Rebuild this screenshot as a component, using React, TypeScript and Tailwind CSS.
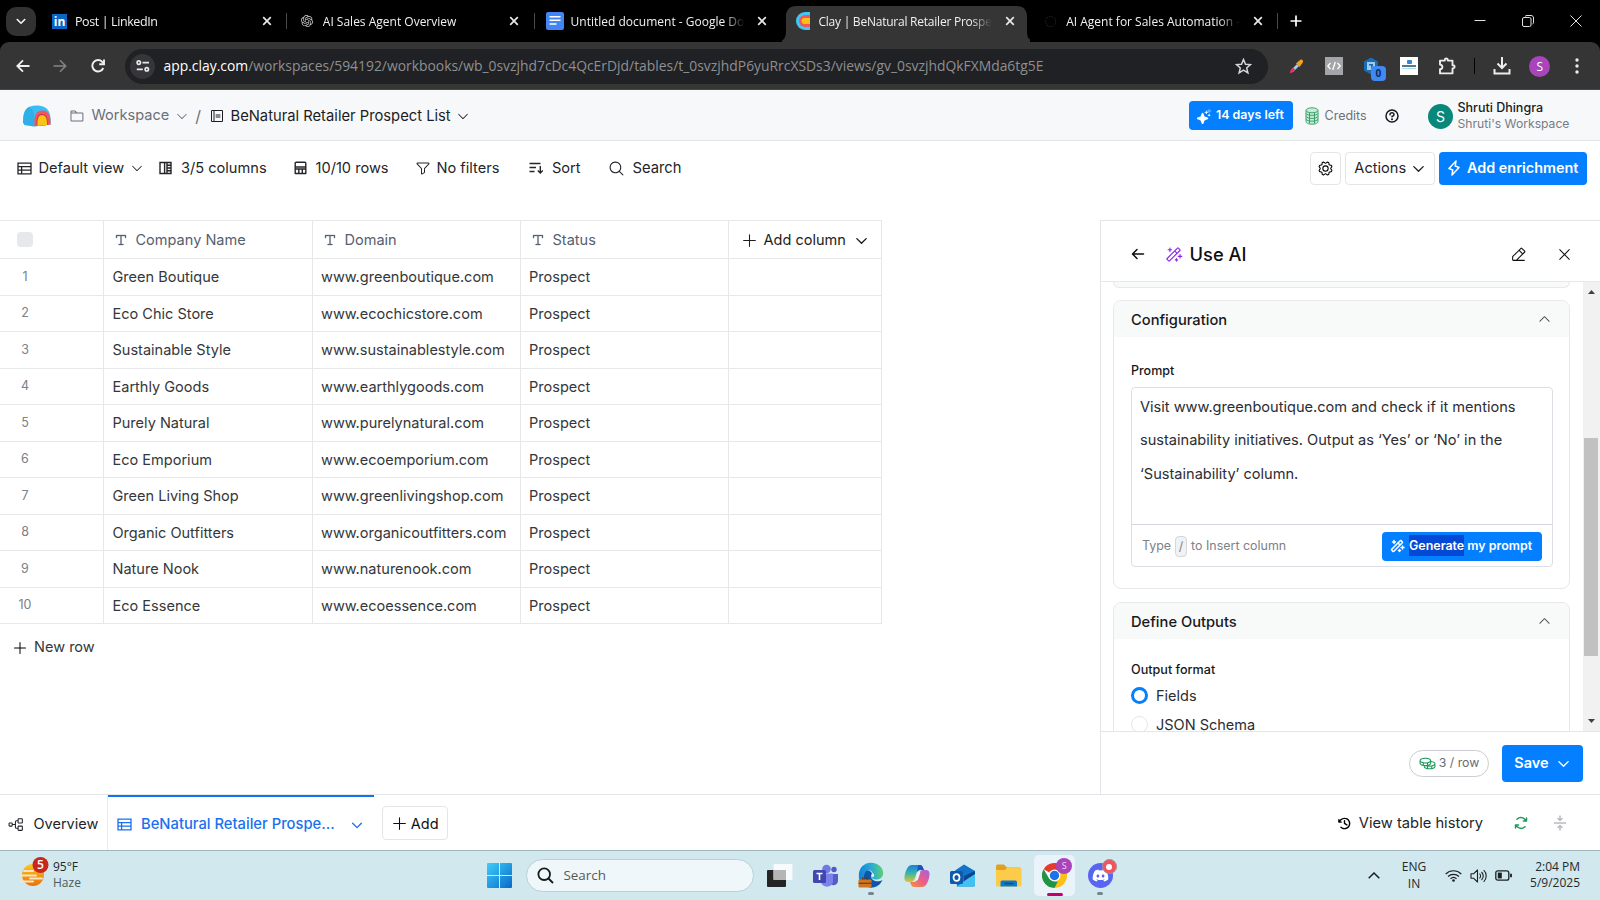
import React from 'react';
import {
  PiArrowLeftBold,
  PiArrowsClockwiseBold,
  PiArrowsInLineVerticalBold,
  PiCaretDown,
  PiCaretDownBold,
  PiCaretUp,
  PiClockCounterClockwiseBold,
  PiCoins,
  PiFolder,
  PiFunnel,
  PiGear,
  PiLightningBold,
  PiMagicWand,
  PiMagicWandBold,
  PiMagnifyingGlass,
  PiNotebook,
  PiPencilSimpleLine,
  PiPlus,
  PiQuestionBold,
  PiSparkleFill,
  PiTextT,
  PiTreeStructure,
  PiX,
} from 'react-icons/pi';
import { SiOpenai } from 'react-icons/si';
import { FaDiscord } from 'react-icons/fa';

const COMPANIES = [
  { name: 'Green Boutique', domain: 'www.greenboutique.com' },
  { name: 'Eco Chic Store', domain: 'www.ecochicstore.com' },
  { name: 'Sustainable Style', domain: 'www.sustainablestyle.com' },
  { name: 'Earthly Goods', domain: 'www.earthlygoods.com' },
  { name: 'Purely Natural', domain: 'www.purelynatural.com' },
  { name: 'Eco Emporium', domain: 'www.ecoemporium.com' },
  { name: 'Green Living Shop', domain: 'www.greenlivingshop.com' },
  { name: 'Organic Outfitters', domain: 'www.organicoutfitters.com' },
  { name: 'Nature Nook', domain: 'www.naturenook.com' },
  { name: 'Eco Essence', domain: 'www.ecoessence.com' },
];

/* ---------- Small drawn icons ---------- */

const TableIcon: React.FC<{ size?: number }> = ({ size = 15 }) => (
  <svg width={size} height={size} viewBox="0 0 15 15" fill="none" stroke="currentColor" strokeWidth="1.3">
    <path d="M1 2.2h13v10.6H1zM1 5.7h13M1 9.2h13M4.6 5.7v7.1" />
  </svg>
);

const ColumnsIcon = () => (
  <svg width="13" height="14" viewBox="0 0 13 14" fill="none" stroke="currentColor" strokeWidth="1.4">
    <path d="M1 1.5h11v11H1zM5.6 1.5v11M7.5 4.2H12M7.5 7H12M7.5 9.8H12M8 1.5v11" />
  </svg>
);

const RowsIcon = () => (
  <svg width="14" height="14" viewBox="0 0 14 14" fill="none" stroke="currentColor" strokeWidth="1.4" strokeLinejoin="round">
    <path d="M1.2 2.2q0-1 1-1h8.6q1 0 1 1v10.3H1.2ZM1.2 6h10.6M1.2 8h10.6M4.8 8v4.5M8.3 8v4.5" />
  </svg>
);

const SortIcon = () => (
  <svg width="15" height="14" viewBox="0 0 15 14" fill="none" stroke="currentColor" strokeWidth="1.4">
    <path d="M.5 2.5h11M.5 6.5h6.5M.5 10.5h5M11.3 5v7M8.8 9.6l2.5 2.5 2.5-2.5" />
  </svg>
);

const ClayLogo = () => (
  <svg width="28" height="22" viewBox="0 0 28 22">
    <path d="M0 17.500C0 8 2 3.500 7 1.500c5-1.500 11-1.200 15 1C26.500 5 28 10 27.600 19.500L11 21.500 1.500 20Z" fill="#39bdf3" />
    <path d="M0 17.500C0 8 2 3.500 6 2.500c5 1 6 8 5 19L1.500 20Z" fill="#28a4dc" opacity=".55" />
    <path d="M11.500 21.300C10.500 10 13.500 5.500 19.300 5.500S28 10.500 27.500 19.500l-3 .5Z" fill="#f2555f" />
    <path d="M13.800 21C13 12.500 15 9 19 9s6 3.500 5.700 11Z" fill="#8f2230" opacity=".55" />
    <path d="M14.500 21C14 13.500 15.500 10 19 10s5.300 3.500 5 10Z" fill="#fcc312" />
  </svg>
);

const ChromeClose = () => (
  <svg width="10" height="10" viewBox="0 0 10 10" stroke="#e8e8e8" strokeWidth="1.7">
    <path d="M1.2 1.2l7.600 7.600M8.800 1.200L1.200 8.800" />
  </svg>
);

/* ---------- Browser chrome ---------- */

interface BrowserTabProps {
  icon: React.ReactNode;
  title: string;
  textClass?: string;
  active?: boolean;
  separator?: boolean;
}

const BrowserTab: React.FC<BrowserTabProps> = ({ icon, title, textClass = 'text-[12px]', active, separator }) => (
  <div className="relative w-[247.8px] h-full flex items-center shrink-0">
    {active && (
      <svg className="absolute left-0 bottom-0" width="248" height="36" viewBox="0 0 248 36" fill="#353535">
        <path d="M-6 36c6 0 10-3 10-10V10C4 4 8 0 14 0h221c6 0 10 4 10 10v16c0 7 4 10 10 10Z" />
      </svg>
    )}
    <span className="relative ml-[11px] w-[19px] flex justify-center shrink-0">{icon}</span>
    <span
      className={`relative ml-[6px] w-[177px] pt-px whitespace-nowrap leading-5 text-[#f1f1f1] font-medium [mask-image:linear-gradient(to_right,#000_153px,transparent_174px)] ${textClass}`}
    >
      {title}
    </span>
    <span className="relative ml-[9.5px]"><ChromeClose /></span>
    {separator && <span className="ml-auto w-px h-4 bg-[#4a4a4a]" />}
  </div>
);

const TabStrip = () => (
  <div className="h-[42px] bg-black flex items-center shrink-0">
    <div className="ml-[6px] w-[30px] h-[29px] rounded-[10px] bg-[#323232] flex items-center justify-center text-white">
      <PiCaretDownBold size={12} strokeWidth={8} stroke="currentColor" />
    </div>
    <div className="ml-[3px] h-full flex">
      <BrowserTab
        separator
        textClass="text-[12.5px] tracking-[-0.4px]"
        title="Post | LinkedIn"
        icon={<span className="w-[15px] h-[15px] bg-[#0a66c2] text-white text-[12px] leading-[15px] font-bold text-center">in</span>}
      />
      <BrowserTab separator title="AI Sales Agent Overview" icon={<SiOpenai size={12} color="#c9c9c9" />} />
      <BrowserTab
        title="Untitled document - Google Do"
        icon={
          <svg width="18" height="18" viewBox="0 0 18 18">
            <rect width="18" height="18" rx="2" fill="#4285f4" />
            <path d="M3.500 4.700h11M3.500 8.300h11M3.500 12h7" stroke="#fff" strokeWidth="1.500" />
          </svg>
        }
      />
      <BrowserTab
        active
        textClass="text-[12px] tracking-[-0.23px]"
        title="Clay | BeNatural Retailer Prospe"
        icon={
          <svg width="15" height="18" viewBox="0 0 15 18">
            <path d="M15 0H10a9 9 0 0 0 0 18h5Z" fill="#3fc8f5" />
            <path d="M15 3H10a6 6 0 0 0 0 12h5Z" fill="#f0565f" />
            <path d="M15 6H9.500a3 3 0 0 0 0 6H15Z" fill="#fbbf14" />
          </svg>
        }
      />
      <BrowserTab
        separator
        title="AI Agent for Sales Automation -"
        icon={<span className="w-[11px] h-[11px] rounded-full border border-dotted border-[#2c2c2c]" />}
      />
    </div>
    <svg className="ml-[12px] text-white" width="12" height="12" viewBox="0 0 12 12" stroke="currentColor" strokeWidth="1.700">
      <path d="M6 .5v11M.5 6h11" />
    </svg>
    <div className="ml-auto mr-[18px] flex items-center gap-[36px] text-[#e2e2e2]">
      <svg width="12" height="12" viewBox="0 0 12 12" stroke="currentColor"><path d="M.5 5.500h11" /></svg>
      <svg width="12" height="12" viewBox="0 0 12 12" stroke="currentColor" fill="none">
        <rect x=".5" y="2.500" width="8.500" height="9" rx="1.500" />
        <path d="M3 1.500C3.500.8 4 .5 5 .5h4c1.500 0 2.500 1 2.500 2.500v4c0 1-.5 2-1 2.200" />
      </svg>
      <svg width="12" height="12" viewBox="0 0 12 12" stroke="currentColor"><path d="M.5.5l11 11M11.500.5l-11 11" /></svg>
    </div>
  </div>
);

const ExtSlot: React.FC<{ children: React.ReactNode }> = ({ children }) => (
  <div className="w-[37.5px] flex items-center justify-center shrink-0">{children}</div>
);

const AddressBar = () => (
  <div className="bg-black shrink-0">
    <div className="h-12 pt-px bg-[#353535] rounded-t-[9px] flex items-center border-b border-[#484848]">
      <svg className="ml-[16px]" width="14" height="14" viewBox="0 0 14 14" fill="none" stroke="#f0f0f0" strokeWidth="1.800">
        <path d="M13.500 7H1.500M7 1.300L1.300 7 7 12.700" />
      </svg>
      <svg className="ml-[23px]" width="14" height="14" viewBox="0 0 14 14" fill="none" stroke="#858585" strokeWidth="1.500">
        <path d="M.5 7h12M7 1.300L12.700 7 7 12.700" />
      </svg>
      <svg className="ml-[24px]" width="14" height="14" viewBox="0 0 14 14" fill="none" stroke="#f0f0f0" strokeWidth="1.900">
        <path d="M12.300 9a5.700 5.700 0 1 1-1.100-6.200L12.600 4.300" />
        <path d="M13 .4v4.800H8.200" />
      </svg>
      <div className="ml-5 w-[1143px] h-[35px] rounded-full bg-[#202124] flex items-center shrink-0">
        <span className="ml-[5px] w-[25px] h-[25px] rounded-full bg-[#363639] flex items-center justify-center">
          <svg width="14" height="12" viewBox="0 0 14 12" fill="none" stroke="#e8e8e8" strokeWidth="1.700">
            <circle cx="2.800" cy="2.600" r="1.700" />
            <path d="M6.500 2.600H13M.8 9.300h6" />
            <circle cx="10.800" cy="9.300" r="1.700" />
          </svg>
        </span>
        <span className="ml-[8.5px] pt-px text-[13.88px] text-[#8e8f92] whitespace-nowrap">
          <span className="text-white">app.clay.com</span>
          /workspaces/594192/workbooks/wb_0svzjhd7cDc4QcErDjd/tables/t_0svzjhdP6yuRrcXSDs3/views/gv_0svzjhdQkFXMda6tg5E
        </span>
        <svg className="ml-auto mr-[16px]" width="17" height="17" viewBox="0 0 17 17" fill="none" stroke="#d6d6d6" strokeWidth="1.500">
          <path d="M8.500 1.500l2 4.700 5 .4-3.800 3.300 1.200 5-4.400-2.700-4.400 2.700 1.200-5L1.500 6.600l5-.4Z" />
        </svg>
      </div>
      <div className="ml-[10px] flex items-center">
        <ExtSlot>
          <svg width="15" height="15" viewBox="0 0 15 15">
            <path d="M1.300 13.700l1-3 5.500-5.500 2 2-5.500 5.500Z" fill="#9fd0ee" />
            <path d="M.8 14.200l1-3.500L4 8.500l2.300 2.300L4 13Z" fill="#e8305e" />
            <path d="M7 4.500L11 1c2-1.500 4 1 2.600 2.800L10.500 8Z" fill="#f6a01b" />
          </svg>
        </ExtSlot>
        <ExtSlot>
          <svg width="18" height="18" viewBox="0 0 18 18" fill="none" stroke="#fff" strokeWidth="1.300">
            <rect width="18" height="18" fill="#a3a5a8" stroke="none" />
            <path d="M5.500 6L2.800 9l2.700 3M12.500 6l2.700 3-2.700 3M10.300 5l-2.600 8" />
          </svg>
        </ExtSlot>
        <ExtSlot>
          <span className="relative -ml-[2px]">
            <svg width="16" height="18" viewBox="0 0 16 18">
              <path d="M8 .5l7 4v9l-7 4-7-4v-9Z" fill="#1c6cb4" />
              <path d="M4 5h8v8H4Z" fill="#9bcbef" />
              <path d="M6 7h4v1.500L8 12V8.500H6Z" fill="#1c6cb4" />
            </svg>
            <span className="absolute left-[8px] top-[9px] w-[15px] h-[15px] rounded-[4px] bg-[#4088f2] text-[#0d2a5c] text-[10px] leading-[15px] text-center font-bold">0</span>
          </span>
        </ExtSlot>
        <ExtSlot>
          <span className="w-[18px] h-[18px] bg-white flex flex-col items-center pt-[3px]">
            <span className="w-[5px] h-[4px] bg-[#3a86c4] rounded-[1px]" />
            <span className="mt-[1px] w-[14px] h-[2px] bg-[#5b7590]" />
            <span className="mt-[1px] w-[14px] h-px bg-[#a8dcf0]" />
          </span>
        </ExtSlot>
        <ExtSlot>
          <svg width="18" height="18" viewBox="0 0 18 18" fill="none" stroke="#ececec" strokeWidth="1.900" strokeLinejoin="round">
            <path d="M2 3.600h4.800V3a1.500 1.500 0 0 1 3 0v.6h4.700v4.600h.5a1.600 1.600 0 0 1 0 3.200h-.5v5H2v-4.200c3.200-.3 3.200-4.300 0-4.600Z" />
          </svg>
        </ExtSlot>
        <span className="w-[18px] flex justify-center"><span className="w-px h-4 bg-black" /></span>
        <ExtSlot>
          <svg width="18" height="18" viewBox="0 0 18 18" fill="none" stroke="#ececec" strokeWidth="2">
            <path d="M9 0v10.500M4.500 6.500L9 11l4.500-4.500M1.500 12v4.500h15V12" />
          </svg>
        </ExtSlot>
        <ExtSlot>
          <span className="w-[21px] h-[21px] rounded-full bg-[#a944bb] text-white text-[12px] leading-[21px] text-center">S</span>
        </ExtSlot>
        <ExtSlot>
          <svg width="4" height="16" viewBox="0 0 4 16" fill="#ececec">
            <circle cx="2" cy="2" r="1.700" /><circle cx="2" cy="8" r="1.700" /><circle cx="2" cy="14" r="1.700" />
          </svg>
        </ExtSlot>
      </div>
    </div>
  </div>
);

/* ---------- Clay header and toolbar ---------- */

const AppHeader = () => (
  <div className="h-[51px] pt-[2px] bg-[#f7f8fa] border-b border-[#e4e5e9] flex items-center shrink-0 text-[14.6px] whitespace-nowrap">
    <div className="ml-[23px]"><ClayLogo /></div>
    <div className="ml-[18px] w-[132px] flex items-center text-[#6b7078] shrink-0">
      <PiFolder size={16} />
      <span className="ml-[6.5px]">Workspace</span>
      <PiCaretDown size={14} className="ml-[6px]" />
      <span className="ml-[6px] text-[16px] leading-none">/</span>
    </div>
    <div className="ml-[7.5px] flex items-center text-[#1c1d22]">
      <PiNotebook size={16} />
      <span className="ml-[6px] text-[14.75px]">BeNatural Retailer Prospect List</span>
      <PiCaretDown size={14} className="ml-[5.5px]" />
    </div>
    <button className="ml-auto -mt-px w-[104px] h-[29px] bg-[#047fff] rounded-[4px] text-white text-[12.4px] font-semibold flex items-center shrink-0">
      <span className="relative ml-[7px] w-[15px] h-[16px]">
        <PiSparkleFill size={15} className="absolute left-0 top-[2px]" />
        <PiPlus size={6} className="absolute right-[-1px] top-0" />
      </span>
      <span className="ml-[5px]">14 days left</span>
    </button>
    <div className="ml-[12px] w-[87px] flex items-center text-[12.5px] text-[#6d7278]">
      <svg width="14" height="18" viewBox="0 0 14 18" fill="#c9ecd8" stroke="#2a9c62" strokeWidth=".9">
        <path d="M1 3.500v11C1 16 3.500 17.200 7 17.200s6-1.200 6-2.700v-11" />
        <ellipse cx="7" cy="3.300" rx="6" ry="2.500" />
        <path d="M1 6.500C2 9 12 9 13 6.500M1 9.500C2 12 12 12 13 9.500M1 12.300c1 2.500 11 2.500 12 0M4.500 5.500v11.200M9.500 5.500v11.200" fill="none" />
      </svg>
      <span className="ml-[5.5px]">Credits</span>
    </div>
    <PiQuestionBold size={16} className="-ml-[8px] text-[#17181c]" />
    <div className="ml-[28px] w-[172px] flex items-center">
      <span className="w-[25px] h-[25px] rounded-full bg-[#07887a] text-white text-[14px] leading-[25px] text-center">S</span>
      <div className="ml-[4.5px] text-[12.5px] leading-[16.5px]">
        <div className="font-medium text-[#1a1b1f]">Shruti Dhingra</div>
        <div className="text-[#777c84] text-[12.15px]">Shruti's Workspace</div>
      </div>
    </div>
  </div>
);

const ToolbarItem: React.FC<{ className: string; icon: React.ReactNode; children: React.ReactNode }> = ({ className, icon, children }) => (
  <div className={`flex items-center shrink-0 ${className}`}>
    <span className="w-[22px] shrink-0">{icon}</span>
    {children}
  </div>
);

const Toolbar = () => (
  <div className="h-[79px] pt-[11px] shrink-0">
    <div className="h-[33px] pl-[16.5px] pr-[13px] flex items-center text-[14.6px] text-[#24252a] whitespace-nowrap">
      <ToolbarItem className="w-[142.5px]" icon={<TableIcon />}>
        Default view <PiCaretDown size={14} className="ml-[6px]" />
      </ToolbarItem>
      <ToolbarItem className="w-[134.5px]" icon={<ColumnsIcon />}>3/5 columns</ToolbarItem>
      <ToolbarItem className="w-[121px]" icon={<RowsIcon />}>10/10 rows</ToolbarItem>
      <ToolbarItem className="w-[113px]" icon={<PiFunnel size={16} />}>No filters</ToolbarItem>
      <ToolbarItem className="w-[80px]" icon={<span className="block pl-px"><SortIcon /></span>}><span className="ml-[2.5px]">Sort</span></ToolbarItem>
      <ToolbarItem className="" icon={<PiMagnifyingGlass size={17} />}><span className="ml-[3px] text-[14.75px]">Search</span></ToolbarItem>
      <button className="ml-auto w-[31px] h-[33px] border border-[#e4e5e9] rounded-[4px] flex items-center justify-center text-black">
        <PiGear size={17} />
      </button>
      <button className="ml-[4px] w-[90px] h-[33px] border border-[#e4e5e9] rounded-[4px] flex items-center justify-center">
        Actions <PiCaretDownBold size={15} className="ml-[4.5px]" />
      </button>
      <button className="ml-[4px] w-[148px] h-[33px] pb-px bg-[#047fff] rounded-[4px] text-white text-[14.4px] font-semibold flex items-center">
        <PiLightningBold size={16} className="ml-[7px]" />
        <span className="ml-[5px]">Add enrichment</span>
      </button>
    </div>
  </div>
);

/* ---------- Table ---------- */

const HeaderCell: React.FC<{ label: string; className: string }> = ({ label, className }) => (
  <div className={`border-r border-[#e7e8ea] pt-[2px] flex items-center text-[#566070] ${className}`}>
    <PiTextT size={16} className="ml-[9px] mb-[2px]" strokeWidth={5} stroke="currentColor" />
    <span className="ml-[6.5px]">{label}</span>
  </div>
);

const DataTable = () => (
  <div className="flex-1 text-[14.54px] whitespace-nowrap text-[#35373b]">
    <div className="w-[882px] border-t border-[#e7e8ea]">
      <div className="h-[38px] flex border-b border-[#e7e8ea]">
        <div className="w-[104px] border-r border-[#e7e8ea] flex items-center">
          <span className="ml-[17px] w-[16px] h-[15px] rounded-[4px] bg-[#e7e8eb]" />
        </div>
        <HeaderCell label="Company Name" className="w-[209px]" />
        <HeaderCell label="Domain" className="w-[208px]" />
        <HeaderCell label="Status" className="w-[208px]" />
        <div className="w-[153px] border-r border-[#e7e8ea] pt-[2px] flex items-center text-[#1c1d22]">
          <PiPlus size={17} className="ml-[12px]" />
          <span className="ml-[5.5px]">Add column</span>
          <PiCaretDownBold size={15} className="ml-[8px]" />
        </div>
      </div>
      {COMPANIES.map((c, i) => (
        <div key={c.domain} className="h-[36.5px] flex border-b border-[#e7e8ea]">
          <div className="w-[104px] border-r border-[#e7e8ea] pt-px flex items-center">
            <span className="w-[50px] text-center text-[12.5px] text-[#7c8087]">{i + 1}</span>
          </div>
          <div className="w-[209px] border-r border-[#e7e8ea] pl-[8.5px] pt-[3px] flex items-center">{c.name}</div>
          <div className="w-[208px] border-r border-[#e7e8ea] pl-[8px] pt-[3px] flex items-center">{c.domain}</div>
          <div className="w-[208px] border-r border-[#e7e8ea] pl-[8px] pt-[3px] flex items-center">Prospect</div>
          <div className="w-[153px] border-r border-[#e7e8ea]" />
        </div>
      ))}
    </div>
    <div className="h-[47px] pt-px flex items-center">
      <PiPlus size={16} className="ml-[12px] text-black" />
      <span className="ml-[6px]">New row</span>
    </div>
  </div>
);

/* ---------- Use AI side panel ---------- */

const PanelCard: React.FC<{ title: string; className?: string; children: React.ReactNode }> = ({ title, className = '', children }) => (
  <div className={`border border-[#e7e8ea] rounded-[8px] overflow-hidden shrink-0 ${className}`}>
    <div className="h-[36px] pl-[17px] pr-[17.5px] bg-[#f8faf9] flex items-center text-[14.7px] font-medium text-[#17181c]">
      <span className="pt-[2px]">{title}</span>
      <PiCaretUp size={15} className="ml-auto text-[#4a4d55]" />
    </div>
    {children}
  </div>
);

const SidePanel = () => (
  <div className="w-[500px] border-l border-t border-[#e4e5e9] flex flex-col shrink-0 whitespace-nowrap">
    <div className="h-[61px] pt-[6px] border-b border-[#e7e8ea] flex items-center shrink-0 text-[#0e0f12]">
      <PiArrowLeftBold size={16} className="ml-[28.5px]" />
      <PiMagicWand size={19} className="ml-[18.5px] text-[#8b2be8]" />
      <span className="ml-[6.5px] pt-px text-[18.3px] font-medium">Use AI</span>
      <PiPencilSimpleLine size={17} className="ml-auto" />
      <PiX size={17} className="ml-[29px] mr-[27px]" />
    </div>
    <div className="h-[450px] flex border-b border-[#e4e5e9] shrink-0">
      <div className="flex-1 h-full pl-[12px] pr-[13px] flex flex-col overflow-hidden">
        <div className="h-[6px] border border-t-0 border-[#e7e8ea] rounded-b-[8px] bg-[#f8faf9] shrink-0" />
        <PanelCard title="Configuration" className="mt-[12px] h-[289px]">
          <div className="mt-[25px] ml-[17px] text-[12.5px] leading-[18px] font-medium text-[#17181c]">Prompt</div>
          <div className="mt-[7px] ml-[17px] w-[422px] h-[180px] border border-[#dcdee3] rounded-[4px] flex flex-col">
            <div className="h-[137px] pl-[8px] pt-[3px] text-[14.58px] leading-[33.4px] text-[#2b2d33] border-b border-[#d3d6dc]">
              Visit www.greenboutique.com and check if it mentions
              <br />
              sustainability initiatives. Output as ‘Yes’ or ‘No’ in the
              <br />
              ‘Sustainability’ column.
            </div>
            <div className="flex-1 pt-px flex items-center pl-[10px] pr-[10px] text-[12.45px] text-[#7d8188]">
              Type
              <span className="mx-[4px] w-[12px] h-[21px] rounded-[4px] border border-[#d5d7da] bg-[#f1f2f3] text-center leading-[19px]">/</span>
              to Insert column
              <button className="ml-auto w-[160px] h-[29px] rounded-[4px] bg-[#047fff] text-white text-[12.45px] font-semibold flex items-center">
                <PiMagicWandBold size={16} className="ml-[7px]" />
                <span className="ml-[4px]"><span className="bg-[#0449d6] py-[3px]">Generate</span> my prompt</span>
              </button>
            </div>
          </div>
        </PanelCard>
        <PanelCard title="Define Outputs" className="mt-[13px] h-[170px]">
          <div className="mt-[22px] ml-[17px] text-[12.6px] leading-[18px] font-medium text-[#17181c]">Output format</div>
          <div className="mt-[7px] ml-[17px] flex items-center text-[14.5px] leading-[19px] text-[#2b2d33]">
            <span className="w-[17px] h-[17px] rounded-full border-[3.5px] border-[#047fff]" />
            <span className="ml-[8px]">Fields</span>
          </div>
          <div className="mt-[10px] ml-[17px] flex items-center text-[14.5px] leading-[19px] text-[#2b2d33]">
            <span className="w-[17px] h-[17px] rounded-full border border-[#e4e5e9]" />
            <span className="ml-[8px]">JSON Schema</span>
          </div>
        </PanelCard>
      </div>
      <div className="w-[17px] bg-[#f1f1f1] flex flex-col items-center shrink-0">
        <svg className="mt-[8px]" width="7" height="4" viewBox="0 0 7 4" fill="#404040"><path d="M0 4l3.500-4L7 4Z" /></svg>
        <div className="mt-[144px] mr-px w-[14px] h-[218px] bg-[#c1c1c1]" />
        <svg className="mt-auto mb-[8px]" width="7" height="4" viewBox="0 0 7 4" fill="#404040"><path d="M0 0l3.500 4L7 0Z" /></svg>
      </div>
    </div>
    <div className="flex-1 flex items-center justify-end pr-[17px]">
      <div className="w-[80px] h-[27px] pt-px rounded-full border border-[#cbcdd2] flex items-center justify-center text-[12.3px] text-[#686c73]">
        <PiCoins size={17} className="text-[#1b9a59] mr-[3px]" />
        3 / row
      </div>
      <button className="ml-[13px] w-[81px] h-[37px] rounded-[4px] bg-[#047fff] text-white text-[14.5px] font-semibold flex items-center justify-center">
        Save <PiCaretDownBold size={15} className="ml-[7px]" />
      </button>
    </div>
  </div>
);

/* ---------- Bottom tabs ---------- */

const BottomBar = () => (
  <div className="h-[56px] border-t border-[#e4e5e9] flex items-center shrink-0 text-[14.5px] text-[#24252a] whitespace-nowrap">
    <div className="w-[108px] h-full pt-[3px] border-r border-[#e9eaec] flex items-center">
      <PiTreeStructure size={17} className="ml-[8px]" />
      <span className="ml-[8.5px]">Overview</span>
    </div>
    <div className="w-[266px] h-full pt-[2px] border-t-2 border-[#156ff5] flex items-center text-[#1a70f0] font-medium text-[14.75px]">
      <span className="ml-[9px]"><TableIcon /></span>
      <span className="ml-[9px]">BeNatural Retailer Prospe...</span>
      <PiCaretDownBold size={14} className="ml-[15px]" />
    </div>
    <button className="ml-[8px] mt-px w-[66px] h-[34px] pt-px border border-[#e4e5e9] rounded-[4px] flex items-center justify-center text-[#0e0f12]">
      <PiPlus size={17} className="mr-[2.5px]" /> Add
    </button>
    <PiClockCounterClockwiseBold size={15} className="ml-auto mt-px text-black" />
    <span className="ml-[6.5px] pt-[2px] text-[14.72px]">View table history</span>
    <PiArrowsClockwiseBold size={16} className="ml-[30px] mt-px text-[#1b9a59]" />
    <PiArrowsInLineVerticalBold size={16} className="ml-[23px] mr-[32px] mt-px text-[#b9bbbf]" />
  </div>
);

/* ---------- Windows taskbar ---------- */

const TaskSlot: React.FC<{ children: React.ReactNode; marker?: boolean }> = ({ children, marker }) => (
  <div className="relative w-[45.8px] h-full flex items-center justify-center">
    {children}
    {marker && <span className="absolute bottom-[5px] w-[6px] h-[3px] rounded-full bg-[#75858c]" />}
  </div>
);

const Taskbar = () => (
  <div className="h-[50px] bg-[#d0e8ee] border-t border-[#9fb6bf] flex items-center shrink-0 text-[12px] text-[#24292c] whitespace-nowrap">
    <div className="ml-[20px] w-[467px] flex items-center">
      <svg className="-mt-[5px]" width="30" height="32" viewBox="0 0 30 32">
        <defs>
          <linearGradient id="sun" x1="0" y1="0" x2="0" y2="1">
            <stop stopColor="#fbc91b" /><stop offset="1" stopColor="#e8710c" />
          </linearGradient>
        </defs>
        <circle cx="13" cy="18" r="11" fill="url(#sun)" />
        <path d="M4 14h9M1 18.500h15M10 21.500h12M1 24.500h12" stroke="#f9e3c4" strokeWidth="2" strokeLinecap="round" />
        <circle cx="20.500" cy="8" r="8" fill="#c9271e" />
        <text x="20.500" y="12.300" textAnchor="middle" fontSize="12" fontWeight="600" fill="#fff">5</text>
      </svg>
      <div className="ml-[3px] -mt-px leading-[16.5px]">
        <div>95°F</div>
        <div className="text-[#4d5a60]">Haze</div>
      </div>
    </div>
    <svg width="25" height="25" viewBox="0 0 25 25">
      <defs>
        <linearGradient id="win" x1="0" y1="0" x2="1" y2="1">
          <stop stopColor="#40cdfb" /><stop offset="1" stopColor="#0669c9" />
        </linearGradient>
      </defs>
      <path d="M0 1a1 1 0 0 1 1-1h11v12H0ZM13 0h11a1 1 0 0 1 1 1v11H13ZM0 13h12v12H1a1 1 0 0 1-1-1ZM13 13h12v11a1 1 0 0 1-1 1H13Z" fill="url(#win)" />
    </svg>
    <div className="ml-[14px] w-[228px] h-[33px] rounded-full bg-[#eff7fa] border border-[#b9d0d8] flex items-center text-[13.4px] text-[#56595c]">
      <svg className="ml-[10px]" width="17" height="17" viewBox="0 0 17 17" fill="none" stroke="#17191b" strokeWidth="1.800">
        <circle cx="7.200" cy="7.200" r="5.800" /><path d="M11.500 11.500l4.500 4.500" />
      </svg>
      <span className="ml-[9.5px]">Search</span>
    </div>
    <div className="ml-[3px] h-full flex">
      <TaskSlot>
        <svg width="26" height="25" viewBox="0 0 26 25">
          <rect x="0" y="7" width="19" height="17" rx="1" fill="#242424" />
          <rect x="6.500" y="1" width="19" height="16" rx="1" fill="#fff" opacity=".82" />
          <rect x="6.500" y="7" width="12.500" height="10" fill="#b5b5b5" />
        </svg>
      </TaskSlot>
      <TaskSlot>
        <svg width="26" height="24" viewBox="0 0 26 24">
          <circle cx="13.500" cy="5" r="4.300" fill="#7178e6" />
          <circle cx="21" cy="5.500" r="2.700" fill="#5259c3" />
          <path d="M16 10h9v6.500c0 5-6 6-8 3Z" fill="#565dc8" />
          <path d="M8 9.500h12V17c0 7.500-12 7.500-12 0Z" fill="#7b83eb" />
          <rect x="0" y="6" width="13" height="13" rx="1.500" fill="#4048ae" />
          <path d="M3.500 9.500h6M6.500 9.500v6.500" stroke="#fff" strokeWidth="1.600" />
        </svg>
      </TaskSlot>
      <TaskSlot marker>
        <svg className="-mt-px" width="26" height="26" viewBox="0 0 26 26">
          <defs>
            <linearGradient id="edge" x1="0" y1=".3" x2="1" y2=".2">
              <stop stopColor="#1583d6" /><stop offset=".5" stopColor="#26a9d9" /><stop offset="1" stopColor="#61d46a" />
            </linearGradient>
          </defs>
          <path d="M1 13a12.200 12.200 0 0 0 23.500 5c-3 1.800-8 2-10.500-1-1.500-2-1-4 0-5.500C12 7 4 6.500 1 13Z" fill="#0f56a8" />
          <path d="M.8 13C1 5.500 6.500.8 13 .8c7.500 0 12.200 5.200 12.200 10.200 0 4.500-3.500 6.500-7 6.500-3 0-4.800-1.300-4.500-3 .3-1 1.200-1.300 1-3.300C14.500 9 12 8 10 8.200 7.500 8.500 5.500 12 6 17l-4.500 2Q.8 16 .8 13Z" fill="url(#edge)" />
          <path d="M14.800 11c-1.300 1.500-1.500 3 .2 4.500 1.500-.8 1.500-3.500-.2-4.500Z" fill="#e4f4f6" />
          <rect x=".5" y="17.500" width="13" height="8" rx="1" fill="#cf7420" />
          <path d="M4.500 17.500V16h5v1.500M.5 21.200h13" stroke="#6b3206" strokeWidth="1.100" fill="none" />
        </svg>
      </TaskSlot>
      <TaskSlot>
        <svg width="26" height="24" viewBox="0 0 26 24">
          <defs>
            <linearGradient id="copA" x1="0" y1="0" x2="0" y2="1">
              <stop stopColor="#1a7fe5" /><stop offset=".5" stopColor="#39b8a4" /><stop offset="1" stopColor="#e7c32e" />
            </linearGradient>
            <linearGradient id="copB" x1="1" y1="0" x2="0" y2="1">
              <stop stopColor="#a061e8" /><stop offset=".5" stopColor="#ef5d86" /><stop offset="1" stopColor="#f4923b" />
            </linearGradient>
          </defs>
          <path d="M8 1h8c2.500 0 3 3 4 5h-4c-3 0-3.500 3-4.500 6.500S9.500 18 6 18H4c-4 0-4-4-3-8S4 1 8 1Z" fill="url(#copA)" />
          <path d="M18 23h-8c-2.500 0-3-3-4-5h4c3 0 3.500-3 4.500-6.500S16.500 6 20 6h2c4 0 4 4 3 8s-3 9-7 9Z" fill="url(#copB)" />
          <path d="M16 1c2.500 0 3 3 4 5h-4c-1.500 0-2.500 1-3 2.500L14 1Z" fill="#1d52c2" />
          <path d="M15.500 8h-1.300l-3 8.500h1.500c1.200 0 1.800-2 2.800-5.500s1-3 0-3Z" fill="#e9f3f5" />
        </svg>
      </TaskSlot>
      <TaskSlot>
        <svg width="26" height="23" viewBox="0 0 26 23">
          <path d="M5 6.500L14 .5l11 6.500v14a1.500 1.500 0 0 1-1.500 1.500H7Z" fill="#1374cc" />
          <path d="M7 22.500L25 9v12a1.500 1.500 0 0 1-1.500 1.500Z" fill="#41c0f2" />
          <path d="M14 12l11-5v3l-11 7Z" fill="#0c468f" />
          <rect x="0" y="7" width="13" height="13" rx="1.500" fill="#0f59ad" />
          <ellipse cx="6.500" cy="13.500" rx="3" ry="3.400" fill="none" stroke="#fff" strokeWidth="1.700" />
        </svg>
      </TaskSlot>
      <TaskSlot>
        <svg width="26" height="23" viewBox="0 0 26 23">
          <path d="M0 2a1.500 1.500 0 0 1 1.500-1.500H8L11 3.500h13V10H0Z" fill="#e0a020" />
          <path d="M0 6h9l2-2.500h13A1.500 1.500 0 0 1 25.500 5v16A1.500 1.500 0 0 1 24 22.500H1.500A1.500 1.500 0 0 1 0 21Z" fill="#fccb49" />
          <path d="M4.500 22.500V18A1.500 1.500 0 0 1 6 16.500h13.500A1.500 1.500 0 0 1 21 18v4.500Z" fill="#0c79c8" />
          <path d="M8 19.500h9.500" stroke="#0a4f8c" strokeWidth="1.500" />
        </svg>
      </TaskSlot>
      <TaskSlot>
        <span className="relative w-[41px] h-[41px] rounded-[5px] bg-[#e9f3f9] flex items-center justify-center">
          <svg width="25" height="25" viewBox="0 0 24 24">
            <circle cx="12" cy="12" r="12" fill="#fff" />
            <path d="M12 12L1.600 6A12 12 0 0 1 22.400 6Z" fill="#e33b2e" />
            <path d="M12 12L22.400 6A12 12 0 0 1 12 24l-1-4Z" fill="#fbc116" />
            <path d="M12 24A12 12 0 0 1 1.600 6L7 15l5 2.500 3 .5Z" fill="#229342" />
            <path d="M12 6.500H22.600L22.400 6H9Z" fill="#e33b2e" />
            <circle cx="12" cy="12" r="5.700" fill="#fff" />
            <circle cx="12" cy="12" r="4.500" fill="#1a73e8" />
          </svg>
          <span className="absolute right-[3px] top-[3px] w-[16px] h-[16px] rounded-full bg-[#a944bb] text-[#f0d5f5] text-[9px] leading-[16px] text-center">S</span>
          <span className="absolute bottom-0 w-[16px] h-[3px] rounded-full bg-[#c4006b]" />
        </span>
      </TaskSlot>
      <TaskSlot marker>
        <span className="relative w-[25px] h-[25px] rounded-full bg-[#5765f2] flex items-center justify-center text-white">
          <FaDiscord size={17} />
          <span className="absolute -right-[4px] -top-[4px] w-[15px] h-[15px] rounded-full bg-[#f0545c] border border-[#b08a90] flex items-center justify-center">
            <span className="w-[6px] h-[6px] rounded-full bg-white" />
          </span>
        </span>
      </TaskSlot>
    </div>
    <div className="ml-auto mr-[20px] flex items-center">
      <svg width="12" height="7" viewBox="0 0 12 7" fill="none" stroke="#1c2022" strokeWidth="1.500"><path d="M.7 6.300L6 1l5.300 5.300" /></svg>
      <div className="ml-[20px] w-[28px] text-center leading-[16.5px]">
        <div>ENG</div>
        <div>IN</div>
      </div>
      <svg className="ml-[17px]" width="17" height="13" viewBox="0 0 17 13" fill="none" stroke="#1c2022" strokeWidth="1.200">
        <path d="M.7 5a11 11 0 0 1 15.600 0M3 7.500a8 8 0 0 1 11 0M5.500 9.700a4.500 4.500 0 0 1 6 0" />
        <circle cx="8.500" cy="11.500" r="1.300" fill="#1c2022" stroke="none" />
      </svg>
      <svg className="ml-[8px]" width="17" height="14" viewBox="0 0 17 14" fill="none" stroke="#1c2022" strokeWidth="1.100">
        <path d="M1 4.800h2.500L7.500 1v12L3.500 9.200H1Z" strokeLinejoin="round" />
        <path d="M9.500 4.700a3 3 0 0 1 0 4.600M11.500 3a5.500 5.500 0 0 1 0 8M13.700 1.200a8 8 0 0 1 0 11.600" />
      </svg>
      <svg className="ml-[8px]" width="17" height="11" viewBox="0 0 17 11" fill="none" stroke="#1c2022" strokeWidth="1.300">
        <rect x=".8" y=".8" width="13" height="9.400" rx="2" />
        <path d="M16 3.800v3.400" strokeWidth="1.800" />
        <rect x="2.800" y="2.600" width="4" height="5.800" fill="#1c2022" stroke="none" />
      </svg>
      <div className="w-[68px] -mt-px text-right leading-[16.5px]">
        <div>2:04 PM</div>
        <div>5/9/2025</div>
      </div>
    </div>
  </div>
);

export default function App() {
  return (
    <div className="w-[1600px] h-[900px] overflow-hidden flex flex-col bg-white">
      <div className="font-['Open_Sans',sans-serif] shrink-0">
        <TabStrip />
        <AddressBar />
      </div>
      <div className="flex-1 min-h-0 flex flex-col font-['Inter',sans-serif]">
        <AppHeader />
        <Toolbar />
        <div className="flex-1 min-h-0 flex">
          <DataTable />
          <SidePanel />
        </div>
        <BottomBar />
      </div>
      <div className="font-['Open_Sans',sans-serif] shrink-0">
        <Taskbar />
      </div>
    </div>
  );
}
